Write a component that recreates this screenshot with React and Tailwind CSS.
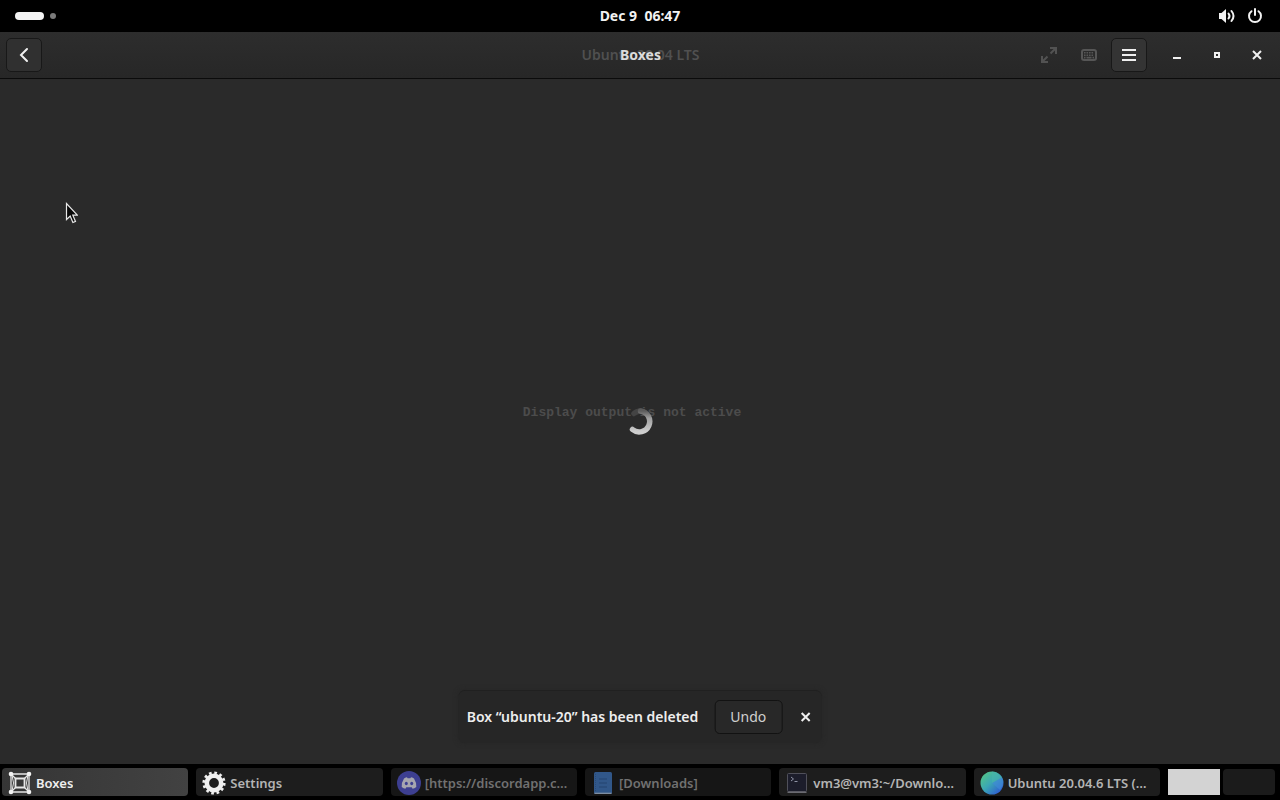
import React from "react";

const focus = "focus-visible:outline focus-visible:outline-1 focus-visible:outline-[#888]";

function TopBar() {
  return (
    <div className="grid h-8 grid-cols-[1fr_auto_1fr] items-center bg-black px-[15px] text-[#f2f2f2]">
      <button aria-label="Activities" className="flex items-center gap-[6px] justify-self-start">
        <span className="h-2 w-[29px] rounded-full bg-[#f4f4f4]" />
        <span className="size-[6px] rounded-full bg-[#7b7b7b]" />
      </button>
      <button className="whitespace-pre text-sm font-bold">Dec 9  06:47</button>
      <button aria-label="System" className="mr-[2px] flex items-center gap-3 justify-self-end">
        <svg viewBox="0 0 16 16" className="h-4 w-4" fill="none" stroke="currentColor">
          <path d="M0 5h2.500L7 1v14l-4.500-4H0z" fill="currentColor" stroke="none" />
          <path d="M9.500 5.500q2 2.500 0 5" strokeWidth="2" strokeLinecap="round" />
          <path d="M12.500 3q4 5 0 10" strokeWidth="2" strokeLinecap="round" />
        </svg>
        <svg viewBox="0 0 16 16" className="h-4 w-4" fill="none" stroke="currentColor" strokeWidth="2" strokeLinecap="round">
          <path d="M4.500 3.200a6 6 0 1 0 7 0M8 1v6" />
        </svg>
      </button>
    </div>
  );
}

function Header() {
  const flat = "flex h-[34px] w-9 items-center justify-center rounded-[5px] " + focus;
  return (
    <header className="grid h-[47px] grid-cols-[1fr_auto_1fr] items-center border-b border-[#0b0b0b] bg-linear-to-b from-[#2d2d2d] to-[#272727] pr-[5px] pl-[6px] text-[#f0f0f0]">
      <button aria-label="Back" className={flat + " border border-[#181818] bg-[#303030]"}>
        <svg viewBox="0 0 16 16" className="size-4" fill="none" stroke="currentColor" strokeWidth="2" strokeLinecap="round">
          <path d="M11 2L5 8l6 6" />
        </svg>
      </button>
      <div className="grid place-items-center whitespace-nowrap text-sm font-semibold">
        <span className="col-start-1 row-start-1 text-[#505050]">Ubuntu 20.04 LTS</span>
        <h1 className="col-start-1 row-start-1 font-bold text-[#dcdcdc]">Boxes</h1>
      </div>
      <div className="flex items-center gap-1 justify-self-end">
        <button aria-label="Fullscreen" className={flat + " text-[#525252]"}>
          <svg viewBox="0 0 16 16" className="size-4" fill="none" stroke="currentColor" strokeWidth="2">
            <path d="M9 1h6v6M15 1L9.500 6.500M7 15H1V9M1 15l5.500-5.500" />
          </svg>
        </button>
        <button aria-label="Keyboard" className={flat + " text-[#565656]"}>
          <svg viewBox="0 0 16 16" className="size-4" fill="none" stroke="currentColor">
            <rect x="1" y="3" width="14" height="10" rx="2" strokeWidth="2" />
            <path d="M3 5.800h10M3 8.200h10" strokeDasharray="1.600 .9" strokeWidth="1.600" />
            <path d="M3 10.600h1.500M5.500 10.600h5M11.500 10.600H13" strokeWidth="1.600" />
          </svg>
        </button>
        <button aria-label="Menu" className={flat + " border border-[#181818] bg-[#343434]"}>
          <svg viewBox="0 0 16 16" className="size-4" stroke="currentColor" strokeWidth="2">
            <path d="M1 3h14M1 8h14M1 13h14" />
          </svg>
        </button>
        <button aria-label="Minimize" className={flat + " ml-2"}>
          <svg viewBox="0 0 16 16" className="size-4" stroke="currentColor" strokeWidth="2">
            <path d="M4 11h8" />
          </svg>
        </button>
        <button aria-label="Maximize" className={flat}>
          <svg viewBox="0 0 16 16" className="size-4" fill="none" stroke="currentColor" strokeWidth="2">
            <path d="M6 6h4v4H6z" />
          </svg>
        </button>
        <button aria-label="Close" className={flat}>
          <CloseIcon />
        </button>
      </div>
    </header>
  );
}

function CloseIcon() {
  return (
    <svg viewBox="0 0 16 16" className="size-4" stroke="currentColor" strokeWidth="2">
      <path d="M4 4l8 8M12 4l-8 8" />
    </svg>
  );
}

function Spinner() {
  return (
    <svg viewBox="0 0 28 28" className="col-start-1 row-start-1 size-7" fill="none" strokeWidth="5.500" strokeLinecap="round" role="img" aria-label="Loading">
      <defs>
        <linearGradient id="arc" x1="0" y1="0" x2="0" y2="1">
          <stop offset="0" stopColor="#5c5c5c" />
          <stop offset=".35" stopColor="#a0a0a0" />
          <stop offset="1" stopColor="#cecece" />
        </linearGradient>
      </defs>
      <path d="M8 5.500Q11 3 15 3" stroke="#444444" />
      <path d="M14.500 3A10.500 10.500 0 1 1 6.500 21.500" stroke="url(#arc)" />
    </svg>
  );
}

function Toast() {
  return (
    <div role="status" className="absolute bottom-[21px] left-1/2 flex h-[53px] -translate-x-1/2 items-center whitespace-nowrap rounded-md border-t border-[#202020] bg-[#262626] px-2 text-sm shadow-[0_0_5px_#262626]">
      <span className="font-semibold text-[#eeeeee]">Box “ubuntu-20” has been deleted</span>
      <button className={"ml-4 h-[34px] w-[68px] rounded-[5px] border border-[#121212] bg-[#282828] text-[#d0d0d0] " + focus}>Undo</button>
      <button aria-label="Dismiss" className={"ml-[15px] text-[#eeeeee] " + focus}>
        <CloseIcon />
      </button>
    </div>
  );
}

function BoxesIcon() {
  return (
    <svg viewBox="0 0 24 24" className="size-6 shrink-0" fill="none" stroke="#e6e6e6" strokeWidth="1.300">
      <path d="M3 3h18v18H3zM3 3l5 5M21 3l-5 5M3 21l5-5M21 21l-5-5" />
      <path d="M7.500 7.500h9v9h-9z" strokeWidth="1.800" />
      <path d="M4 4q3 8 0 16M20 4q-3 8 0 16" strokeWidth="1" />
      <g fill="#f2f2f2" stroke="none">
        <circle cx="3" cy="3" r="2.300" />
        <circle cx="21" cy="3" r="2.300" />
        <circle cx="3" cy="21" r="2.300" />
        <circle cx="21" cy="21" r="2.300" />
      </g>
    </svg>
  );
}

function GearIcon() {
  return (
    <svg viewBox="0 0 24 24" className="size-6 shrink-0" fill="none" stroke="#f0f0f0">
      <circle cx="12" cy="12" r="7.200" strokeWidth="4.600" />
      <circle cx="12" cy="12" r="10.200" strokeWidth="2.800" strokeDasharray="2.670 2.670" />
    </svg>
  );
}

function DiscordIcon() {
  return (
    <svg viewBox="0 0 24 24" className="size-6 shrink-0">
      <circle cx="12" cy="12" r="12" fill="#3d3f91" />
      <path d="M7 7.500q2-1.200 3-1.200l.6 1h2.800l.6-1q1 0 3 1.200 2.600 4 2.300 8.500-2 1.500-3.700 1.700l-.9-1.400H9.300l-.9 1.400Q6.700 17.500 4.700 16 4.400 11.500 7 7.500z" fill="#a6a6af" />
      <ellipse cx="9.300" cy="12.500" rx="1.500" ry="1.700" fill="#3d3f91" />
      <ellipse cx="14.700" cy="12.500" rx="1.500" ry="1.700" fill="#3d3f91" />
    </svg>
  );
}

function FolderIcon() {
  return (
    <svg viewBox="0 0 24 24" className="size-6 shrink-0">
      <rect x="3" y="1" width="18" height="22" rx="1.500" fill="#315789" />
      <path d="M3.500 22.300h17" stroke="#8795a5" strokeWidth="1.200" />
      <path d="M8 8h8M8 12h8M8 16h8" stroke="#294b78" strokeWidth="1.300" />
      <path d="M4.500 3v17" stroke="#284a77" strokeWidth="1" strokeDasharray="1 1" />
    </svg>
  );
}

function TerminalIcon() {
  return (
    <svg viewBox="0 0 24 24" className="size-6 shrink-0" fill="none">
      <rect x="2.500" y="2.500" width="19" height="18" rx="1" fill="#1c1d2b" stroke="#50505a" />
      <path d="M2.500 21.300h19" stroke="#74747c" strokeWidth="1.200" />
      <path d="M6 6l2.500 2L6 10M9.500 10.500h3" stroke="#8e93a5" />
    </svg>
  );
}

function GlobeIcon() {
  return (
    <svg viewBox="0 0 24 24" className="size-6 shrink-0">
      <defs>
        <linearGradient id="globe" x1="0.1" y1="0.2" x2="0.8" y2="0.9">
          <stop offset="0" stopColor="#4fc08f" />
          <stop offset=".45" stopColor="#3ba8b4" />
          <stop offset="1" stopColor="#2f62cf" />
        </linearGradient>
      </defs>
      <circle cx="12" cy="12" r="11.500" fill="url(#globe)" />
      <path d="M12 12L22 6.500Q25 13 20 19z" fill="#418bd9" opacity=".6" />
      <path d="M12 12V.5Q18 1 22 6.500z" fill="#4ab5a9" opacity=".6" />
    </svg>
  );
}

const tasks = [
  { title: "Boxes", Icon: BoxesIcon, style: "bg-linear-to-r from-[#353535] to-[#424242] text-[#eeeeee]" },
  { title: "Settings", Icon: GearIcon, style: "bg-[#1d1d1d] text-[#b4b4b4]" },
  { title: "[https://discordapp.c…", Icon: DiscordIcon, style: "bg-[#161616] text-[#717171]" },
  { title: "[Downloads]", Icon: FolderIcon, style: "bg-[#161616] text-[#717171]" },
  { title: "vm3@vm3:~/Downlo…", Icon: TerminalIcon, style: "bg-[#1d1d1d] text-[#b4b4b4]" },
  { title: "Ubuntu 20.04.6 LTS (…", Icon: GlobeIcon, style: "bg-[#1d1d1d] text-[#b4b4b4]" },
];

function TaskBar() {
  return (
    <nav aria-label="Windows" className="flex h-9 items-center gap-2 bg-black pr-[5px] pl-[2px]">
      {tasks.map(({ title, Icon, style }) => (
        <button key={title} className={"flex h-7 min-w-0 flex-1 items-center gap-1 rounded-[4px] pt-px pr-1 pl-[6px] text-[13px] leading-5 font-semibold " + style}>
          <Icon />
          <span className="overflow-hidden whitespace-nowrap">{title}</span>
        </button>
      ))}
      <div className="flex gap-[3px]">
        <button aria-label="Workspace 1" className="h-[26px] w-[52px] bg-[#d3d3d3]" />
        <button aria-label="Workspace 2" className="h-[26px] w-[52px] rounded-[4px] bg-[#1b1b1b]" />
      </div>
    </nav>
  );
}

export default function App() {
  return (
    <div className="flex min-h-screen flex-col bg-[#2a2a2a] font-['Noto_Sans',sans-serif]">
      <TopBar />
      <Header />
      <main className="relative grid flex-1 place-items-center">
        <p className="col-start-1 row-start-1 pr-4 pb-[18px] font-['Liberation_Mono',monospace] text-[13px] font-bold text-[#4c4c4c]">Display output is not active</p>
        <Spinner />
        <Toast />
        <svg viewBox="0 0 13 22" className="absolute top-[123px] left-[65px] h-[22px] w-[13px]" aria-hidden="true">
          <path d="M1.500 1.500v16l3.700-3.500 2.700 6.500 2.600-1.100-2.700-6.200h4.500z" fill="#080808" stroke="#e8e8e8" strokeWidth="1.200" />
        </svg>
      </main>
      <TaskBar />
    </div>
  );
}
